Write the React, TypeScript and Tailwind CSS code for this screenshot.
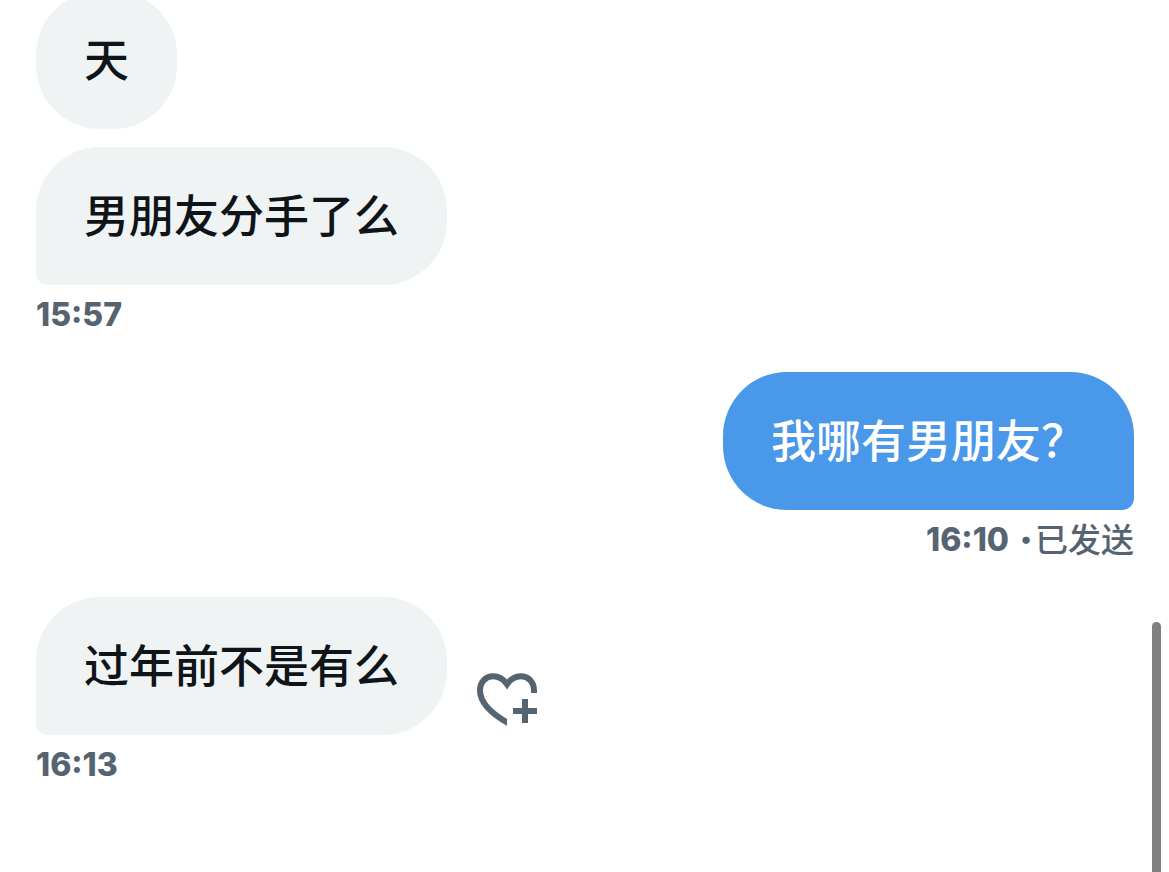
import { useId } from "react";

type Message = {
  id: number;
  text: string;
  time?: string;
  status?: string;
  own?: boolean;
  reactable?: boolean;
};

const messages: Message[] = [
  { id: 1, text: "天" },
  { id: 2, text: "男朋友分手了么", time: "15:57" },
  { id: 3, text: "我哪有男朋友？", time: "16:10", status: "已发送", own: true },
  { id: 4, text: "过年前不是有么", time: "16:13", reactable: true },
];

function HeartPlusIcon() {
  const clip = useId();
  return (
    <svg viewBox="0 0 24 24" className="size-[72px]" fill="none" aria-hidden="true">
      <clipPath id={clip}>
        <path d="M0 0H24V10H12V24H0Z" />
      </clipPath>
      <path
        clipPath={`url(#${clip})`}
        stroke="currentColor"
        strokeWidth="2"
        d="M21 11V9.2C21 6.2 19 4.45 16.7 4.45C14.7 4.45 13.1 5.5 12 7.1C10.9 5.5 9.3 4.45 7.3 4.45C5 4.45 3 6.2 3 9.2C3 13.2 6.6 16.9 13 20.4"
      />
      <path fill="currentColor" d="M17 12v3h-3v2h3v3h2v-3h3v-2h-3v-3z" />
    </svg>
  );
}

function Bubble({ message }: { message: Message }) {
  const shape = message.own
    ? "rounded-br-[12px] bg-[#4a98e9] text-white"
    : message.time
      ? "rounded-bl-[12px] bg-[#eff3f4] text-[#0f1419]"
      : "bg-[#eff3f4] text-[#0f1419]";
  return (
    <p className={`rounded-[64px] px-12 pt-[37px] pb-[35px] text-[45px] leading-[66px] font-medium ${shape}`}>
      {message.text}
    </p>
  );
}

function MessageRow({ message }: { message: Message }) {
  return (
    <li
      className={
        message.own ? "flex flex-col items-end" : "flex flex-col items-start"
      }
    >
      <div className="flex items-end gap-6">
        <Bubble message={message} />
        {message.reactable && (
          <button type="button" aria-label="添加回应" className="shrink-0 text-[#566370]">
            <HeartPlusIcon />
          </button>
        )}
      </div>
      {message.time ? (
        <div className="mt-[9px] mb-9 flex items-center text-[33px] leading-[42px] text-[#566370]">
          <time className="text-[32px] font-extrabold">{message.time}</time>
          {message.status && (
            <>
              <span className="mr-0.5 ml-2.5 text-[40px] font-extrabold">·</span>
              <span className="font-medium">{message.status}</span>
            </>
          )}
        </div>
      ) : (
        <div className="h-[18px]" />
      )}
    </li>
  );
}

export default function App() {
  return (
    <div className="flex h-screen gap-[18px] overflow-hidden bg-white pr-2 pl-9 font-[Inter,'Noto_Sans_CJK_SC',sans-serif]">
      <main className="min-w-0 flex-1">
        <ul className="-mt-[9px]">
          {messages.map((message) => (
            <MessageRow key={message.id} message={message} />
          ))}
        </ul>
      </main>
      <div className="flex w-[9px] flex-col justify-end" aria-hidden="true">
        <div className="h-[250px] rounded-t-full bg-[#808080]" />
      </div>
    </div>
  );
}
